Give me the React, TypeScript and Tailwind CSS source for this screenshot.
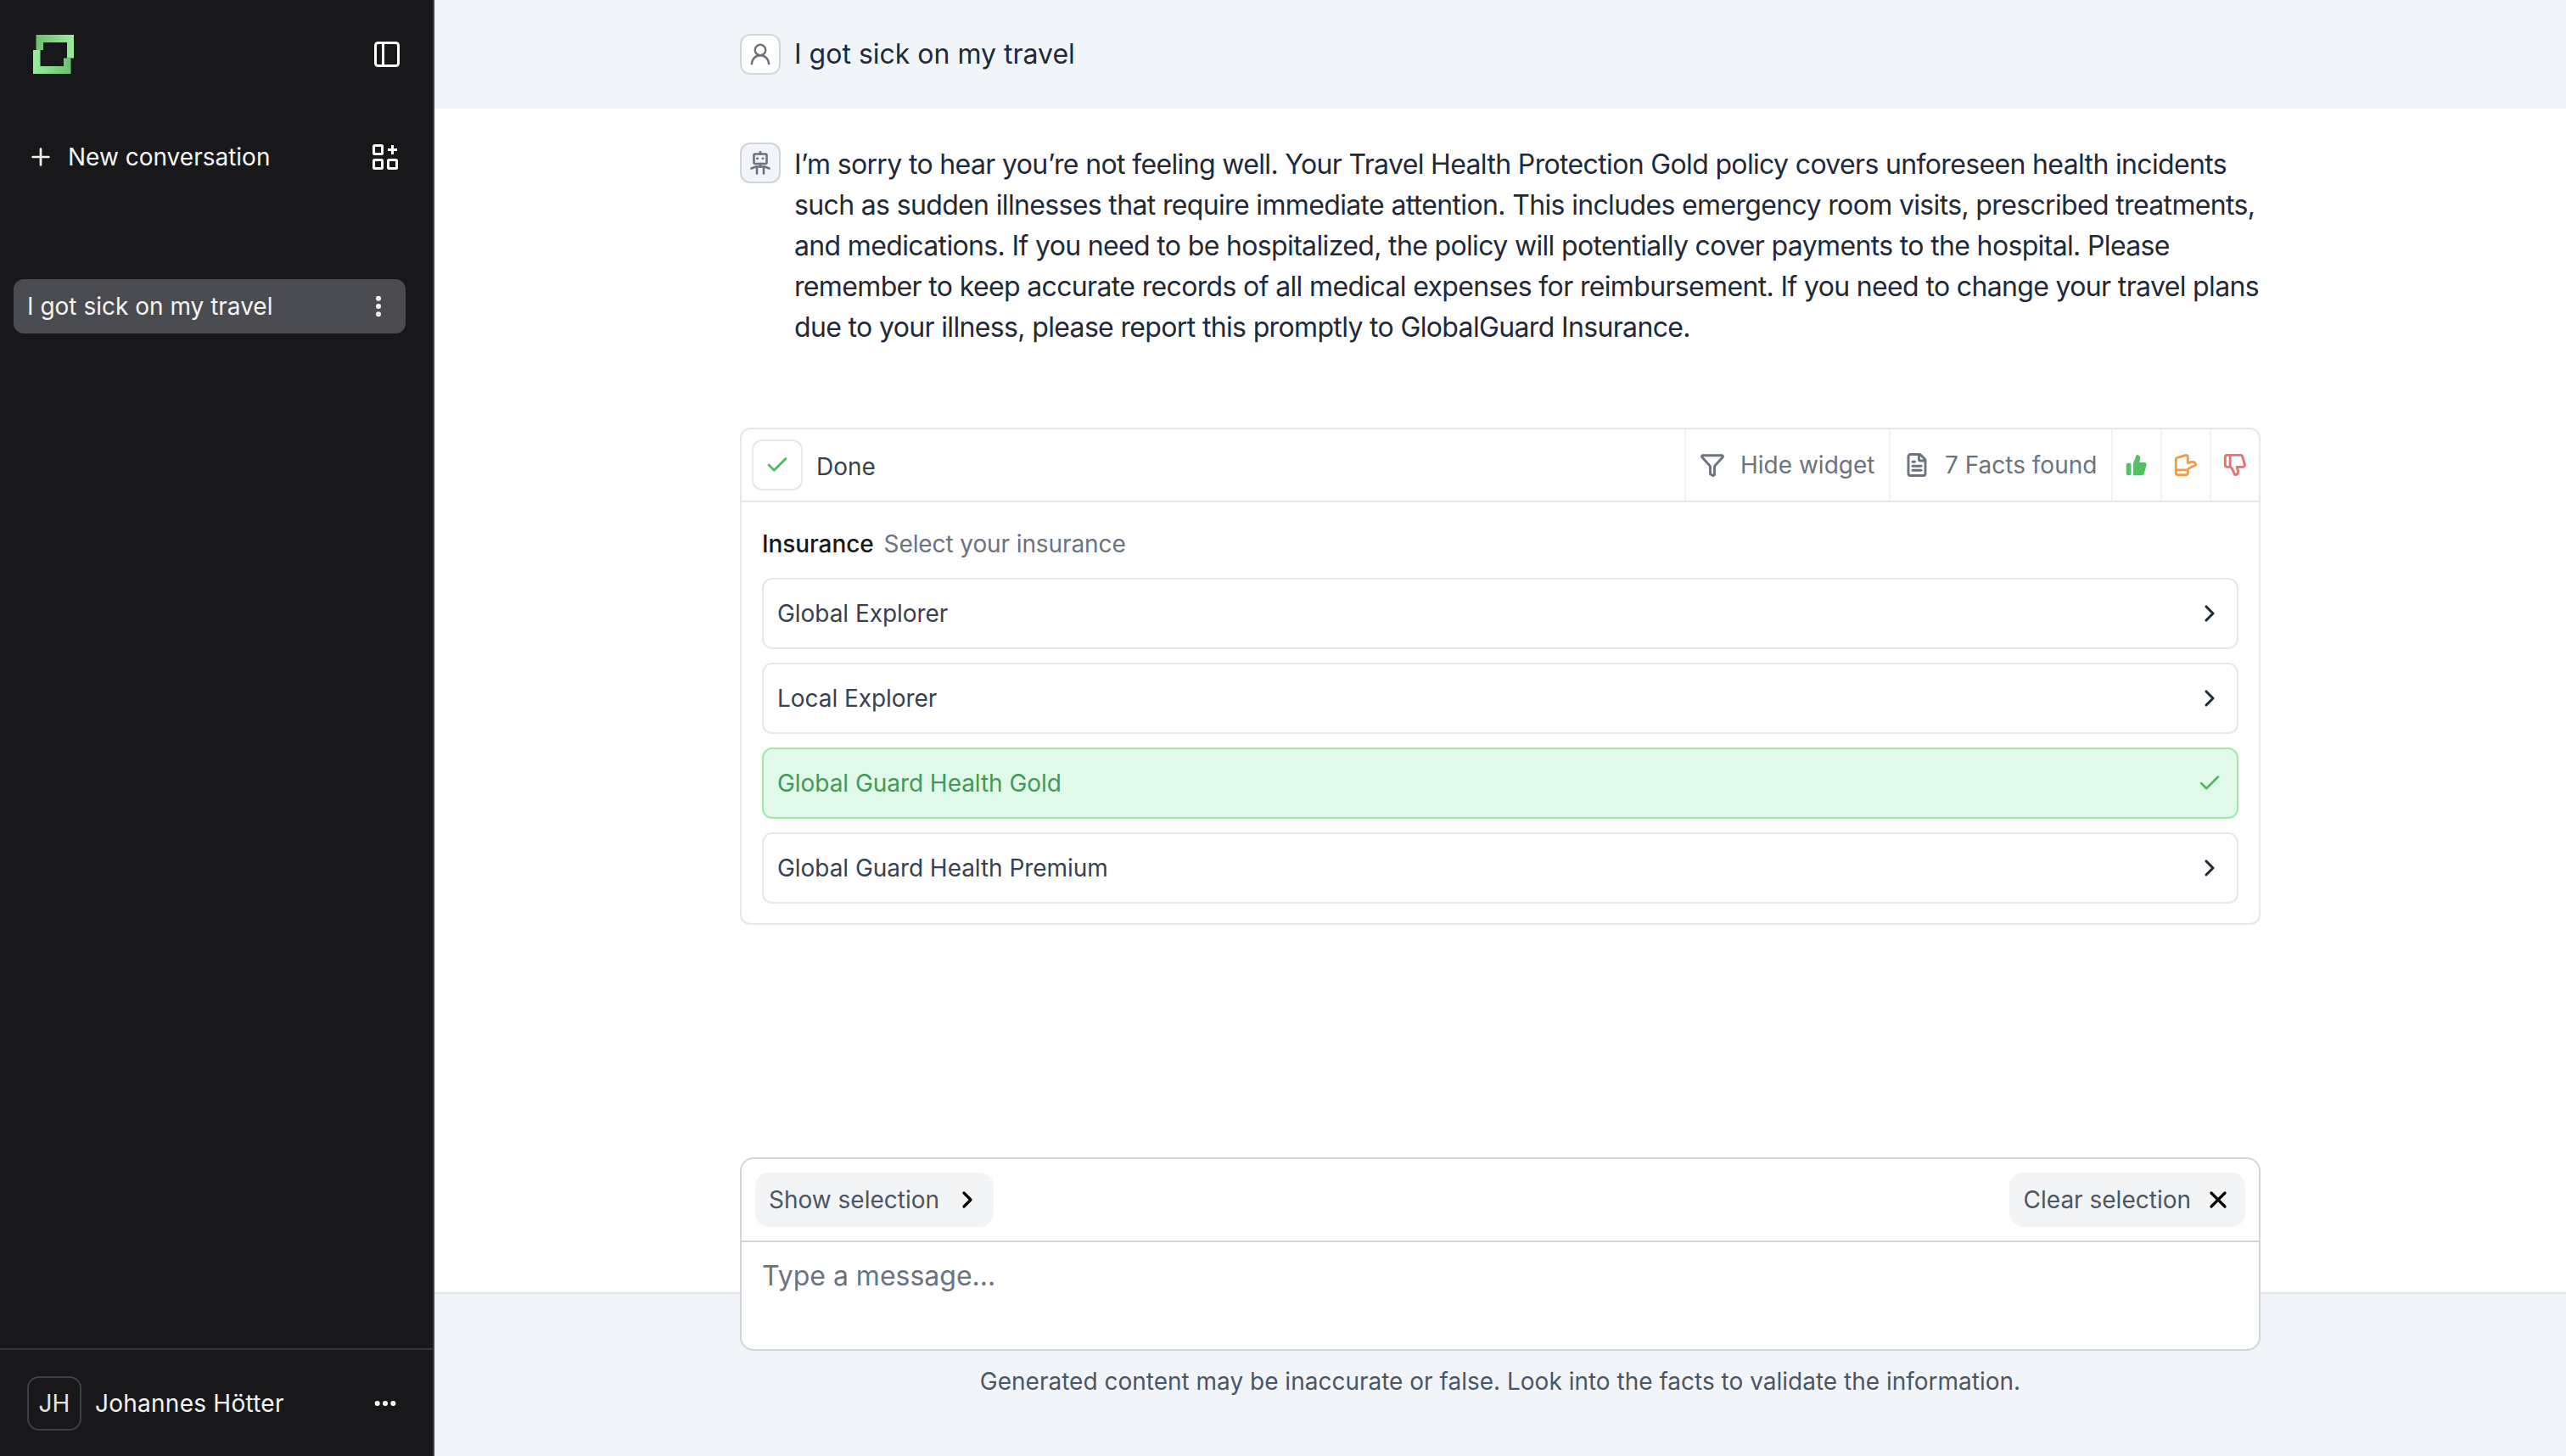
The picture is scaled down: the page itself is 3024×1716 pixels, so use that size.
import { Plus, PanelLeft, EllipsisVertical, Ellipsis, UserRound, Check, ChevronRight, X, Funnel, FileText, ThumbsUp, ThumbsDown } from "lucide-react";

const font = { fontFamily: "Inter, sans-serif" };

function Logo() {
    return (
        <svg width="48" height="46" viewBox="0 0 48 46" fill="none">
            <defs>
                <linearGradient id="lg" x1="0" y1="0" x2="1" y2="0">
                    <stop offset="0" stopColor="#6cc070" />
                    <stop offset="1" stopColor="#98ec9c" />
                </linearGradient>
                <linearGradient id="lg2" x1="0" y1="0" x2="1" y2="0">
                    <stop offset="0" stopColor="#98ec9c" />
                    <stop offset="1" stopColor="#6cc070" />
                </linearGradient>
            </defs>
            <path d="M3.500 0H48V27.500H40V9H12V18H8.500H3.500Z" fill="url(#lg)" />
            <path d="M0 18H8.500V37H36V27.500H44.500V46H0Z" fill="url(#lg2)" />
        </svg>
    );
}

function Robot() {
    return (
        <svg width="24" height="28" viewBox="0 0 24 28" fill="none" stroke="#6b7280" strokeWidth="2.600" strokeLinecap="round" strokeLinejoin="round">
            <path d="M12 1V3.500" />
            <rect x="4.500" y="3.500" width="15" height="11.500" rx="1.500" />
            <path d="M1.500 20.500L6.500 18.500H17.500L22.500 20.500" />
            <path d="M8 18.500V26.500M16 18.500V26.500M12 15V18.500" />
            <rect x="8" y="8" width="1.500" height="1.500" fill="#6b7280" strokeWidth="1" />
            <rect x="14.500" y="8" width="1.500" height="1.500" fill="#6b7280" strokeWidth="1" />
        </svg>
    );
}

function GridPlus() {
    return (
        <svg width="30" height="30" viewBox="0 0 30 30" fill="none" stroke="white" strokeWidth="3">
            <rect x="1.500" y="1.500" width="10" height="10" rx="1" />
            <rect x="1.500" y="18.500" width="10" height="10" rx="1" />
            <rect x="18.500" y="18.500" width="10" height="10" rx="1" />
            <path d="M23.500 1V12M18 6.500H29" />
        </svg>
    );
}

function ThumbFilled() {
    return (
        <svg width="28" height="28" viewBox="0 0 24 24" fill="#55bf67">
            <rect x="1.500" y="10" width="5" height="12.500" rx="2" />
            <path d="M8.500 10.500L11.500 2.500a1 1 0 0 1 1-.8a3.200 3.200 0 0 1 3 4L14.800 9.500h5a2.200 2.200 0 0 1 2.100 2.800l-2.300 8.400a2.400 2.400 0 0 1-2.300 1.800H8.500Z" />
        </svg>
    );
}

const options = ["Global Explorer", "Local Explorer", "Global Guard Health Gold", "Global Guard Health Premium"];

function Sidebar() {
    return (
        <aside className="w-[512px] shrink-0 h-full flex flex-col bg-[#18181b] border-r-2 border-[#3f3f46] text-white">
            <div className="flex items-center justify-between pl-[39px] pr-[36px] pt-[41px]">
                <Logo />
                <PanelLeft size={36} strokeWidth={2} className="text-white" />
            </div>
            <div className="flex items-center justify-between pl-[32px] pr-[41px] mt-[68px] h-[60px]">
                <div className="flex items-center gap-[16px] text-[28px] leading-[40px] text-[#f4f4f5]">
                    <Plus size={32} strokeWidth={2} />
                    New conversation
                </div>
                <GridPlus />
            </div>
            <div className="ml-[16px] mr-[32px] mt-[114px] h-[64px] rounded-[12px] bg-[#4b4b52] flex items-center justify-between pl-[16px] pr-[16px] text-[28px] text-[#f4f4f5]">
                I got sick on my travel
                <EllipsisVertical size={32} strokeWidth={2.500} />
            </div>
            <div className="mt-auto h-[127px] border-t-2 border-[#333338] flex items-center pl-[32px] pr-[40px]">
                <div className="w-[64px] h-[64px] rounded-[14px] border-2 border-[#3f3f46] flex items-center justify-center text-[28px] text-[#e4e4e7]">JH</div>
                <span className="ml-[16px] text-[28px] tracking-[0.25px] text-[#f4f4f5]">Johannes Hötter</span>
                <Ellipsis size={32} strokeWidth={2.500} className="ml-auto" />
            </div>
        </aside>
    );
}

function Widget() {
    return (
        <div className="mt-[94px] w-[1792px] h-[586px] rounded-[12px] border-2 border-[#e5e7eb]">
            <div className="flex h-[86px] border-b-2 border-[#e5e7eb] items-stretch">
                <div className="flex items-center pl-[12px] flex-1">
                    <div className="w-[60px] h-[60px] rounded-[12px] border-2 border-[#e5e7eb] flex items-center justify-center">
                        <Check size={30} strokeWidth={2.200} className="text-[#4cbb5f]" />
                    </div>
                    <span className="ml-[16px] mt-[3px] text-[28px] text-[#374151]">Done</span>
                </div>
                <div className="w-[241px] border-l-2 border-[#f3f4f6] flex items-center gap-[18px] pl-[16px] text-[28px] text-[#6b7280]">
                    <Funnel size={30} strokeWidth={2.300} />
                    Hide widget
                </div>
                <div className="w-[262px] border-l-2 border-[#f3f4f6] flex items-center gap-[18px] pl-[16px] text-[28px] text-[#6b7280] whitespace-nowrap">
                    <FileText size={30} strokeWidth={2.300} />
                    7 Facts found
                </div>
                <div className="w-[58px] border-l-2 border-[#f3f4f6] flex items-center justify-center">
                    <ThumbFilled />
                </div>
                <div className="w-[58px] border-l-2 border-[#f3f4f6] flex items-center justify-center">
                    <ThumbsUp size={28} strokeWidth={2.500} className="text-[#f59a45] -scale-x-100 rotate-90" />
                </div>
                <div className="w-[58px] border-l-2 border-[#f3f4f6] flex items-center justify-center">
                    <ThumbsDown size={28} strokeWidth={2.500} className="text-[#ec7070] -scale-x-100" />
                </div>
            </div>
            <div className="px-[24px]">
                <div className="mt-[29px] flex items-center gap-[12px] text-[28px] leading-[40px] tracking-[-0.1px]">
                    <span className="font-medium text-[#18181b]">Insurance</span>
                    <span className="text-[#6b7280]">Select your insurance</span>
                </div>
                <div className="mt-[20px] flex flex-col gap-[16px]">
                    {options.map((o, i) =>
                        i === 2 ? (
                            <div key={o} className="h-[84px] rounded-[12px] border-2 border-[#98ecaa] bg-[#e1f9e8] flex items-center justify-between pl-[16px] pr-[17px] text-[28px] tracking-[-0.05px] text-[#3f9a57]">
                                {o}
                                <Check size={30} strokeWidth={2} className="text-[#4cbb5f]" />
                            </div>
                        ) : (
                            <div key={o} className="h-[84px] rounded-[12px] border-2 border-[#e5e7eb] flex items-center justify-between pl-[16px] pr-[16px] text-[28px] tracking-[-0.05px] text-[#374151]">
                                {o}
                                <ChevronRight size={32} strokeWidth={2.300} className="text-[#1f2937]" />
                            </div>
                        )
                    )}
                </div>
            </div>
        </div>
    );
}

export default function App() {
    return (
        <div style={font} className="flex h-screen w-full overflow-hidden bg-white">
            <Sidebar />
            <main className="flex-1 h-full flex flex-col min-w-0">
                <div className="h-[128px] shrink-0 bg-[#f1f5f9] flex justify-center">
                    <div className="w-[1792px] flex items-center gap-[16px] text-[32px] text-[#1f2937]">
                        <div className="w-[48px] h-[48px] rounded-[12px] border-2 border-[#d1d5db] bg-white flex items-center justify-center">
                            <UserRound size={30} strokeWidth={2} className="text-[#6b7280]" />
                        </div>
                        I got sick on my travel
                    </div>
                </div>
                <div className="flex-1 flex flex-col items-center pt-[40px]">
                    <div className="w-[1792px] flex gap-[16px]">
                        <div className="w-[48px] h-[48px] shrink-0 rounded-[12px] border-2 border-[#d1d5db] bg-[#f1f5f9] flex items-center justify-center">
                            <Robot />
                        </div>
                        <p className="pt-[2px] text-[32px] leading-[48px] tracking-[-0.65px] text-[#1f2937]">
                            I’m sorry to hear you’re not feeling well. Your Travel Health Protection Gold policy covers unforeseen health incidents such as sudden illnesses that require immediate attention. This includes emergency room visits, prescribed treatments, and medications. If you need to be hospitalized, the policy will potentially cover payments to the hospital. Please remember to keep accurate records of all medical expenses for reimbursement. If you need to change your travel plans due to your illness, please report this promptly to GlobalGuard Insurance.
                        </p>
                    </div>
                    <Widget />
                </div>
                <div className="h-[193px] shrink-0 bg-[#f1f5f9] border-t-2 border-[#e5e7eb] flex flex-col items-center">
                    <div className="-mt-[161px] w-[1792px] h-[228px] rounded-[16px] border-2 border-[#d1d5db] bg-white flex flex-col">
                        <div className="h-[98px] shrink-0 border-b-2 border-[#d1d5db] flex items-center justify-between pl-[16px] pr-[16px]">
                            <div className="h-[64px] rounded-[16px] bg-[#f3f4f6] flex items-center gap-[17px] pl-[16px] pr-[15px] text-[28px] text-[#4b5563]">
                                Show selection
                                <ChevronRight size={32} strokeWidth={2.400} className="text-black" />
                            </div>
                            <div className="h-[64px] rounded-[16px] bg-[#f3f4f6] flex items-center gap-[16px] pl-[17px] pr-[16px] text-[28px] text-[#4b5563]">
                                Clear selection
                                <X size={32} strokeWidth={2.400} className="text-black" />
                            </div>
                        </div>
                        <div className="pl-[24px] pt-[16px] text-[32px] leading-[48px] text-[#6b7280]">Type a message...</div>
                    </div>
                    <div className="mt-[16px] text-[28px] leading-[40px] text-[#4b5563]">
                        Generated content may be inaccurate or false. Look into the facts to validate the information.
                    </div>
                </div>
            </main>
        </div>
    );
}
